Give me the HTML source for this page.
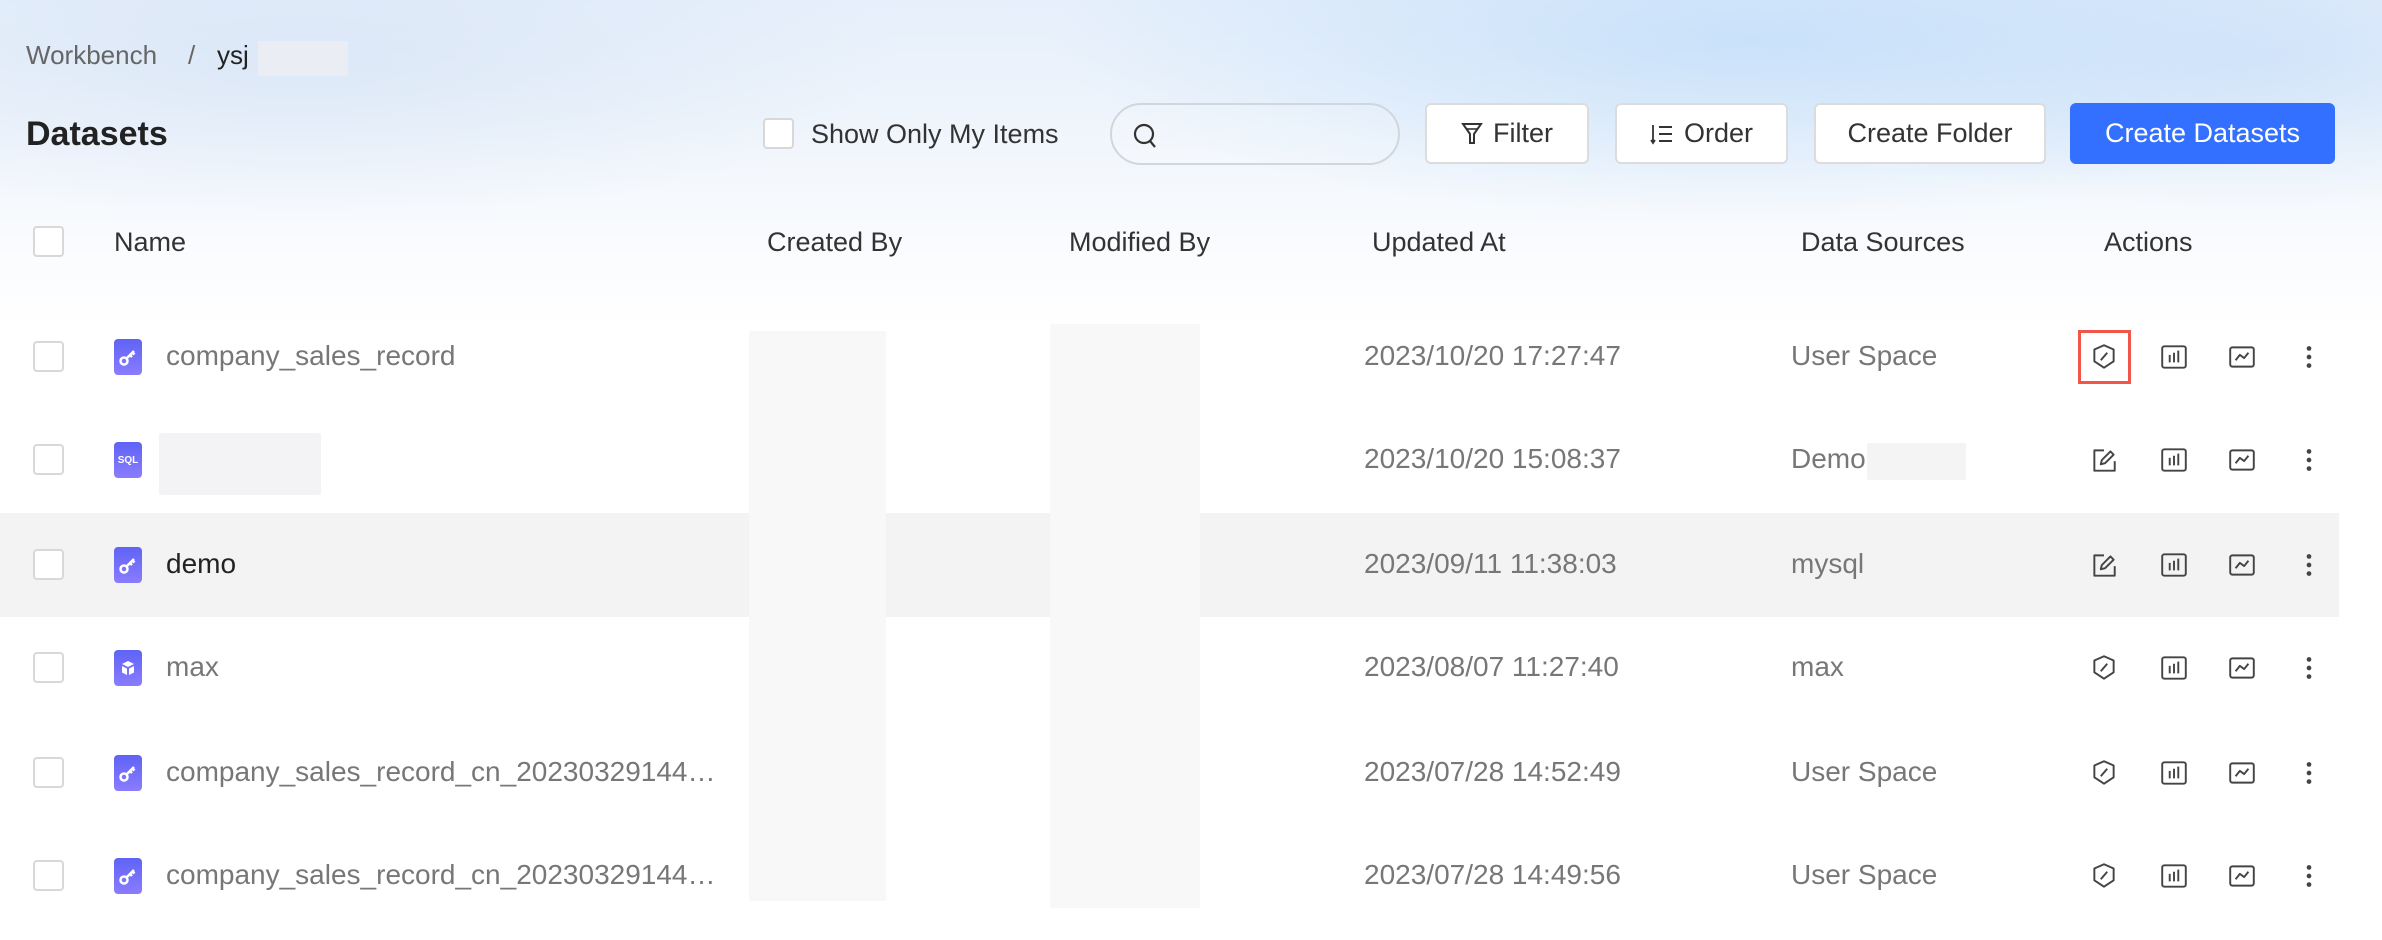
<!DOCTYPE html>
<html><head><meta charset="utf-8"><style>
*{margin:0;padding:0;box-sizing:border-box}
body{width:2382px;height:940px;overflow:hidden;position:relative;font-family:"Liberation Sans",Arial,sans-serif;background:#fff}
.bg{position:absolute;left:0;top:0;width:2382px;height:420px;
background:
radial-gradient(ellipse 700px 180px at 1750px 40px,rgba(190,220,250,.75),rgba(190,220,250,0)),
radial-gradient(ellipse 500px 150px at 2250px 60px,rgba(200,222,248,.6),rgba(200,222,248,0)),
radial-gradient(ellipse 600px 160px at 300px 60px,rgba(210,225,245,.6),rgba(210,225,245,0)),
linear-gradient(180deg,#e6effb 0px,#eef4fb 110px,#f6f9fd 200px,#fff 330px)}
.a{position:absolute}
.t{position:absolute;white-space:nowrap}
.cb{position:absolute;width:31px;height:31px;border:2px solid #d8d8d8;border-radius:4px;background:#fff}
.btn{position:absolute;top:103px;height:61px;border:2px solid #dcdcdc;border-radius:6px;background:#fff;font-size:27px;color:#333;display:flex;align-items:center;justify-content:center;gap:10px}
.hd{position:absolute;top:227px;font-size:27px;color:#333}
.row .t{font-size:28px}
.icon{position:absolute;left:114px;width:28px;height:36px;border-radius:4px;background:linear-gradient(180deg,#5f63f5,#8a7cff);display:flex;align-items:center;justify-content:center;color:#fff}
.blur{position:absolute;background:#f4f4f5;border-radius:2px}
.act{position:absolute;width:30px;height:30px}
</style></head><body>
<div class="bg"></div>
<div class="t" style="left:26px;top:40px;font-size:26px;color:#666">Workbench</div>
<div class="t" style="left:188px;top:40px;font-size:26px;color:#666">/</div>
<div class="t" style="left:217px;top:40px;font-size:26px;color:#222">ysj</div>
<div class="blur" style="left:258px;top:41px;width:90px;height:35px;background:#eaeef4"></div>
<div class="t" style="left:26px;top:115px;font-size:34px;font-weight:bold;color:#222">Datasets</div>
<div class="cb" style="left:763px;top:118px"></div>
<div class="t" style="left:811px;top:119px;font-size:27px;color:#333">Show Only My Items</div>
<div class="a" style="left:1110px;top:103px;width:290px;height:62px;border:2px solid #cfd6de;border-radius:31px;background:rgba(255,255,255,.15)">
<svg style="position:absolute;left:20px;top:16px" width="28" height="30" viewBox="0 0 28 30"><circle cx="12" cy="13" r="9" fill="none" stroke="#333" stroke-width="2.2"/><path d="M18 20l5 6" stroke="#333" stroke-width="2.2"/></svg></div>
<div class="btn" style="left:1425px;width:164px"><svg width="22" height="26" viewBox="0 0 22 26"><path d="M2 3h18l-7 10v9h-4v-9z" fill="none" stroke="#333" stroke-width="2"/><path d="M5 8h12" stroke="#333" stroke-width="1.6"/></svg>Filter</div>
<div class="btn" style="left:1615px;width:173px"><svg width="24" height="24" viewBox="0 0 24 24"><path d="M3 3v18M1 18l2 3 2-3" fill="none" stroke="#333" stroke-width="1.8"/><path d="M9 5h13M9 12h13M9 19h13" stroke="#333" stroke-width="2"/></svg>Order</div>
<div class="btn" style="left:1814px;width:232px">Create Folder</div>
<div class="btn" style="left:2070px;width:265px;background:#3370ff;border-color:#3370ff;color:#fff">Create Datasets</div>

<div class="cb" style="left:33px;top:226px"></div>
<div class="hd" style="left:114px">Name</div>
<div class="hd" style="left:767px">Created By</div>
<div class="hd" style="left:1069px">Modified By</div>
<div class="hd" style="left:1372px">Updated At</div>
<div class="hd" style="left:1801px">Data Sources</div>
<div class="hd" style="left:2104px">Actions</div>

<div class="a" style="left:0;top:513px;width:2339px;height:104px;background:#f3f3f3"></div>
<div class="blur" style="left:749px;top:331px;width:137px;height:570px;background:#f8f8f8"></div>
<div class="blur" style="left:1050px;top:324px;width:150px;height:584px;background:#f8f8f8"></div>
<div class="blur" style="left:159px;top:433px;width:162px;height:62px;background:#f3f3f5"></div>
<div class="blur" style="left:1867px;top:443px;width:99px;height:37px;background:#f4f4f4"></div>

<div id="rows"></div>
<script>
const key='<svg width="20" height="20" viewBox="0 0 20 20"><circle cx="6" cy="14" r="3.5" fill="none" stroke="#fff" stroke-width="2.5"/><path d="M8.5 11.5L16 4M12 8l2 2M14.5 5.5l2 2" stroke="#fff" stroke-width="2.5"/></svg>';
const sql='<span style="font-size:10px;font-weight:bold">SQL</span>';
const cube='<svg width="18" height="18" viewBox="0 0 18 18"><path d="M9 2l6 3-6 3-6-3z" fill="#fff"/><path d="M3 7l5 2.5V16l-5-2.5zM15 7l-5 2.5V16l5-2.5z" fill="#fff"/></svg>';
const rows=[
[357,key,'company_sales_record','#777','2023/10/20 17:27:47','User Space','shield',true],
[460,sql,'','#777','2023/10/20 15:08:37','Demo','edit'],
[565,key,'demo','#222','2023/09/11 11:38:03','mysql','edit'],
[668,cube,'max','#777','2023/08/07 11:27:40','max','shield'],
[773,key,'company_sales_record_cn_20230329144…','#777','2023/07/28 14:52:49','User Space','shield'],
[876,key,'company_sales_record_cn_20230329144…','#777','2023/07/28 14:49:56','User Space','shield']];
const s='fill="none" stroke="#444" stroke-width="1.8" stroke-linejoin="round"';
const icons={
shield:`<svg class="act" viewBox="0 0 28 28"><path d="M14 3l9 4v11l-9 6-9-6V7z" ${s}/><path d="M11 17l6-7" ${s}/></svg>`,
edit:`<svg class="act" viewBox="0 0 28 28"><path d="M14 5H5v19h19v-9" ${s}/><path d="M11 18l1-4 8-8 3 3-8 8z" ${s}/></svg>`,
bar:`<svg class="act" viewBox="0 0 28 28"><rect x="3" y="4" width="22" height="20" rx="2" ${s}/><path d="M10 12v7M14 10v9M18 8v11" ${s}/></svg>`,
line:`<svg class="act" viewBox="0 0 28 28"><rect x="3" y="5" width="22" height="18" rx="2" ${s}/><path d="M8 17l4-5 4 3 4-5" ${s}/></svg>`,
dots:`<svg class="act" viewBox="0 0 28 28"><circle cx="14" cy="6" r="2.2" fill="#444"/><circle cx="14" cy="14" r="2.2" fill="#444"/><circle cx="14" cy="22" r="2.2" fill="#444"/></svg>`};
let h='';
for(const r of rows){const c=r[0];
h+=`<div class="row"><div class="cb" style="left:33px;top:${c-16}px"></div>
<div class="icon" style="top:${c-18}px">${r[1]}</div>
<div class="t" style="left:166px;top:${c-17}px;color:${r[3]}">${r[2]}</div>
<div class="t" style="left:1364px;top:${c-17}px;color:#777">${r[4]}</div>
<div class="t" style="left:1791px;top:${c-17}px;color:#777">${r[5]}</div>
<div class="a" style="left:2089px;top:${c-15}px">${icons[r[6]]}</div>
<div class="a" style="left:2159px;top:${c-15}px">${icons.bar}</div>
<div class="a" style="left:2227px;top:${c-15}px">${icons.line}</div>
<div class="a" style="left:2294px;top:${c-15}px">${icons.dots}</div>
${r[7]?`<div class="a" style="left:2078px;top:${c-27}px;width:53px;height:54px;border:3px solid #f0564a"></div>`:''}</div>`;}
document.getElementById('rows').innerHTML=h;
</script>
</body></html>
